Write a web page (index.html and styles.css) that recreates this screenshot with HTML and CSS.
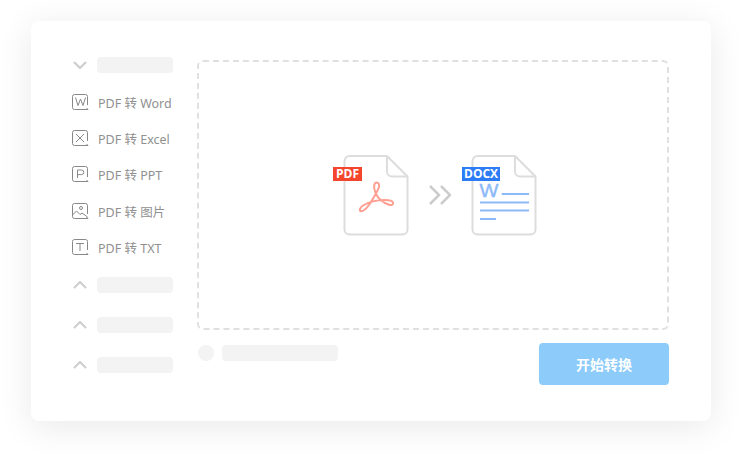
FILE: index.html
```html
<!DOCTYPE html>
<html lang="en">
<head>
    <meta charset="UTF-8">
    <title>PDF 转换</title>
    <link rel="stylesheet" href="styles.css">
</head>
<body>
    <div class="card">
        <div class="sidebar">
            <div class="group">
                <svg class="chevron" viewBox="0 0 14 8"><path d="M1 1l6 6 6-6"/></svg>
                <div class="bar"></div>
            </div>

            <div class="menu">
                <div class="menu-item">
                    <svg class="menu-icon" viewBox="0 0 17 17"><path class="frame" d="M15.5 11V2.5a2 2 0 0 0-2-2h-11a2 2 0 0 0-2 2v11a2 2 0 0 0 2 2h13.500l-1.500-1.500"/><path class="frame" d="M3.500 3.500l2.500 8 2.500-6.500 2.500 6.500 2.500-8"/></svg>
                    <span>PDF 转 Word</span>
                </div>
                <div class="menu-item">
                    <svg class="menu-icon" viewBox="0 0 17 17"><path class="frame" d="M15.5 11V2.5a2 2 0 0 0-2-2h-11a2 2 0 0 0-2 2v11a2 2 0 0 0 2 2h13.500l-1.500-1.500"/><path class="frame" d="M4 4l8 8M12 4l-8 8"/></svg>
                    <span>PDF 转 Excel</span>
                </div>
                <div class="menu-item">
                    <svg class="menu-icon" viewBox="0 0 17 17"><path class="frame" d="M15.5 11V2.5a2 2 0 0 0-2-2h-11a2 2 0 0 0-2 2v11a2 2 0 0 0 2 2h13.500l-1.500-1.500"/><path class="frame" d="M5.500 12V4h4a2.300 2.300 0 0 1 0 4.600h-4"/></svg>
                    <span>PDF 转 PPT</span>
                </div>
                <div class="menu-item">
                    <svg class="menu-icon" viewBox="0 0 17 17"><path class="frame" d="M15.5 11V2.5a2 2 0 0 0-2-2h-11a2 2 0 0 0-2 2v11a2 2 0 0 0 2 2h13.500l-1.500-1.500"/><circle class="frame" cx="9" cy="5" r="1.500"/><path class="frame" d="M.5 12l4-4 3.500 3.500 2-1.500 5.500 4"/></svg>
                    <span>PDF 转 图片</span>
                </div>
                <div class="menu-item">
                    <svg class="menu-icon" viewBox="0 0 17 17"><path class="frame" d="M15.5 11V2.5a2 2 0 0 0-2-2h-11a2 2 0 0 0-2 2v11a2 2 0 0 0 2 2h13.500l-1.500-1.500"/><path class="frame" d="M4 4.500h8M8 4.500V12"/></svg>
                    <span>PDF 转 TXT</span>
                </div>
            </div>

            <div class="group">
                <svg class="chevron" viewBox="0 0 14 8"><path d="M1 7l6-6 6 6"/></svg>
                <div class="bar"></div>
            </div>
            <div class="group">
                <svg class="chevron" viewBox="0 0 14 8"><path d="M1 7l6-6 6 6"/></svg>
                <div class="bar"></div>
            </div>
            <div class="group">
                <svg class="chevron" viewBox="0 0 14 8"><path d="M1 7l6-6 6 6"/></svg>
                <div class="bar"></div>
            </div>
        </div>

        <div class="main">
            <div class="dropzone">
                <div class="file">
                    <svg class="file-icon" viewBox="0 0 66 81">
                        <path class="sheet" d="M44 1H6.500a5 5 0 0 0-5 5v68.500a5 5 0 0 0 5 5h53a5 5 0 0 0 5-5V21.500z"/>
                        <path class="sheet" d="M44 1v15.500a5 5 0 0 0 5 5h15.500"/>
                        <path class="acrobat" d="M33.500 27.500C31.500 27.500 31 30 31.200 33C31.800 39 36.500 45.500 42 48C45 49.500 49.500 51.500 50 48.500C50.300 45.500 46 45 42 45C34 45 25 47.500 20 50.500C17 52.500 16 55.500 17.500 56C20 57 24 53 27 48.500C31 42 35 36 36 32C36.500 29.500 35.500 27.500 33.500 27.500Z"/>
                    </svg>
                    <span class="badge badge-pdf">PDF</span>
                </div>

                <svg class="arrows" viewBox="0 0 22 20"><path d="M1 1l9 9-9 9M12 1l9 9-9 9"/></svg>

                <div class="file">
                    <svg class="file-icon" viewBox="0 0 66 81">
                        <path class="sheet" d="M44 1H6.500a5 5 0 0 0-5 5v68.500a5 5 0 0 0 5 5h53a5 5 0 0 0 5-5V21.500z"/>
                        <path class="sheet" d="M44 1v15.500a5 5 0 0 0 5 5h15.500"/>
                        <text class="doc-w" x="8.500" y="42" textLength="19" lengthAdjust="spacingAndGlyphs">W</text>
                        <path class="doc-lines" d="M30.700 39H58M9 47.500H58M9 55.500H58M9 64H25"/>
                    </svg>
                    <span class="badge badge-docx">DOCX</span>
                </div>
            </div>

            <div class="footer">
                <div class="status">
                    <div class="dot"></div>
                    <div class="bar bar-wide"></div>
                </div>
                <button class="btn">开始转换</button>
            </div>
        </div>
    </div>
</body>
</html>
```

FILE: styles.css
```css
* {
    margin: 0;
    padding: 0;
    box-sizing: border-box;
}

body {
    width: 742px;
    height: 462px;
    padding: 21px 31px;
    background-color: #fff;
    font-family: 'Noto Sans', 'Noto Sans CJK SC', sans-serif;
    overflow: hidden;
}

.card {
    display: flex;
    width: 680px;
    height: 400px;
    padding: 36px 42px 0 41px;
    background: white;
    border-radius: 8px;
    box-shadow: 0 6px 36px rgba(0, 0, 0, 0.09);
}

.sidebar {
    width: 125px;
    flex-shrink: 0;
}

.group {
    display: flex;
    align-items: center;
    gap: 18px;
    height: 16px;
    margin-bottom: 24px;
}

.chevron {
    width: 14px;
    height: 8px;
    margin-left: 1px;
    margin-right: -8px;
    fill: none;
    stroke: #ccc;
    stroke-width: 2;
}

.bar {
    width: 76px;
    height: 16px;
    background: #f3f3f3;
    border-radius: 4px;
}

.bar-wide {
    width: 116px;
}

.menu {
    margin: -13px 0 11px;
}

.menu-item {
    display: flex;
    align-items: center;
    gap: 9px;
    height: 36.4px;
    color: #909090;
    font-size: 12.5px;
    white-space: pre;
}

.menu-icon {
    width: 17px;
    height: 17px;
    flex-shrink: 0;
}

.frame {
    fill: none;
    stroke: #888;
    stroke-width: 1;
}

.main {
    flex: 1;
    padding-top: 3px;
}

.dropzone {
    display: flex;
    align-items: center;
    justify-content: center;
    gap: 20px;
    height: 270px;
    padding-left: 14px;
    border: 2px dashed #e0e0e0;
    border-radius: 6px;
}

.file {
    position: relative;
}

.file-icon {
    display: block;
    width: 66px;
    height: 81px;
}

.sheet {
    fill: none;
    stroke: #ddd;
    stroke-width: 2;
    stroke-linejoin: round;
}

.acrobat {
    fill: none;
    stroke: #ff9f92;
    stroke-width: 2;
}

.doc-w {
    fill: #8db9f8;
    stroke: #8db9f8;
    stroke-width: 0.4;
    font-family: 'Liberation Sans', sans-serif;
    font-size: 18px;
}

.doc-lines {
    fill: none;
    stroke: #8db9f8;
    stroke-width: 2;
}

.badge {
    position: absolute;
    top: 12px;
    height: 14px;
    padding: 0 3px;
    color: white;
    font-family: 'Open Sans', sans-serif;
    font-size: 12px;
    font-weight: 700;
    line-height: 14px;
}

.badge-pdf {
    left: -10px;
    background: #f4452d;
}

.badge-docx {
    left: -9px;
    padding: 0 2px;
    background: #2c7cf6;
}

.arrows {
    width: 22px;
    height: 20px;
    fill: none;
    stroke: #ccc;
    stroke-width: 2.5;
}

.footer {
    display: flex;
    justify-content: space-between;
    margin-top: 13px;
}

.status {
    display: flex;
    gap: 8px;
    padding: 2px 0 0 1px;
}

.dot {
    width: 16px;
    height: 16px;
    background: #f3f3f3;
    border-radius: 50%;
}

.btn {
    width: 130px;
    height: 42px;
    padding-bottom: 1px;
    background: #8ccbfa;
    color: white;
    border: none;
    border-radius: 4px;
    font-family: 'Noto Sans CJK SC', sans-serif;
    font-size: 14px;
    font-weight: 700;
}
```
